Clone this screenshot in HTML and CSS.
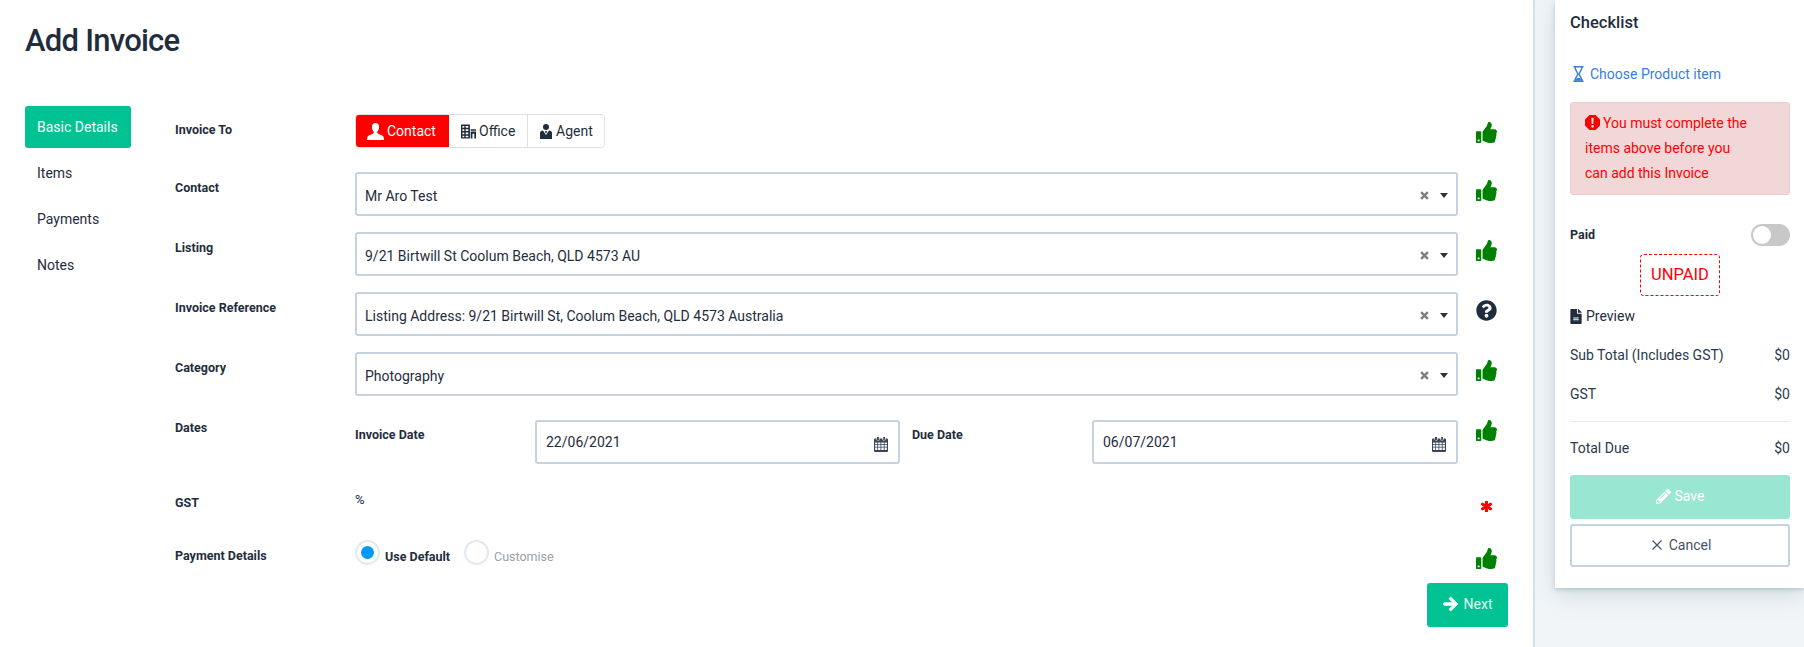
FILE: index.html
```html
<!DOCTYPE html>
<html lang="en">
<head>
<meta charset="utf-8">
<title>Add Invoice</title>
<link rel="stylesheet" href="styles.css">
</head>
<body>
<svg class="sprite" xmlns="http://www.w3.org/2000/svg">
  <symbol id="thumb" viewBox="0 0 512 512"><path d="M104 224H24c-13.255 0-24 10.745-24 24v240c0 13.255 10.745 24 24 24h80c13.255 0 24-10.745 24-24V248c0-13.255-10.745-24-24-24zM64 472c-13.255 0-24-10.745-24-24s10.745-24 24-24 24 10.745 24 24-10.745 24-24 24zM384 81.452c0 42.416-25.97 66.208-33.277 94.548h101.723c33.397 0 59.397 27.746 59.553 58.098.084 17.938-7.546 37.249-19.439 49.197l-.11.11c9.836 23.337 8.237 56.037-9.308 79.469 8.681 25.895-.069 57.704-16.382 74.757 4.298 17.598 2.244 32.575-6.148 44.632C440.202 511.587 389.616 512 346.839 512l-2.845-.001c-48.287-.017-87.806-17.598-119.56-31.725-15.957-7.099-36.821-15.887-52.651-16.178-6.54-.12-11.783-5.457-11.783-11.998v-213.77c0-3.2 1.282-6.271 3.558-8.521 39.614-39.144 56.648-80.587 89.117-113.111 14.804-14.832 20.188-37.236 25.393-58.902C282.515 39.293 291.817 0 312 0c24 0 72 8 72 81.452z"/></symbol>
  <symbol id="question" viewBox="0 0 512 512"><path d="M504 256c0 136.997-111.043 248-248 248S8 392.997 8 256C8 119.083 119.043 8 256 8s248 111.083 248 248zM262.655 90c-54.497 0-89.255 22.957-116.549 63.758-3.536 5.286-2.353 12.415 2.715 16.258l34.699 26.31c5.205 3.947 12.621 3.008 16.665-2.122 17.864-22.658 30.113-35.797 57.303-35.797 20.429 0 45.698 13.148 45.698 32.958 0 14.976-12.363 22.667-32.534 33.976C247.128 238.528 216 254.941 216 296v4c0 6.627 5.373 12 12 12h56c6.627 0 12-5.373 12-12v-1.333c0-28.462 83.186-29.647 83.186-106.667 0-58.002-60.165-102-116.531-102zM256 338c-25.365 0-46 20.635-46 46 0 25.364 20.635 46 46 46s46-20.636 46-46c0-25.365-20.635-46-46-46z"/></symbol>
  <symbol id="asterisk" viewBox="0 0 512 512"><path stroke="currentColor" stroke-width="50" d="M478.21 334.093L336 256l142.21-78.093c11.795-6.477 15.961-21.384 9.232-33.037l-19.48-33.741c-6.728-11.653-21.72-15.499-33.227-8.523L296 186.718l3.475-162.204C299.763 11.061 288.937 0 275.48 0h-38.96c-13.456 0-24.283 11.061-23.994 24.514L216 186.718 77.265 102.606c-11.506-6.976-26.499-3.13-33.227 8.523l-19.48 33.741c-6.728 11.653-2.562 26.56 9.233 33.037L176 256 33.79 334.093c-11.795 6.477-15.961 21.384-9.232 33.037l19.48 33.741c6.728 11.653 21.721 15.499 33.227 8.523L216 325.282l-3.475 162.204C212.237 500.939 223.064 512 236.52 512h38.961c13.456 0 24.283-11.061 23.995-24.514L296 325.282l138.735 84.112c11.506 6.976 26.499 3.13 33.227-8.523l19.48-33.741c6.728-11.653 2.563-26.559-9.232-33.037z"/></symbol>
  <symbol id="calendar" viewBox="0 0 14 15"><path fill-rule="evenodd" d="M3 0h1.6a.6.6 0 0 1 .5.6V3H3.9a1 1 0 0 1-1-1V.6zM9.2.6a.6.6 0 0 1 .6-.6h1.2v2a1 1 0 0 1-1 1h-.8zM1 1.5h1.4V2a1.6 1.6 0 0 0 1.5 1.6h.8A1.2 1.2 0 0 0 5.700 2.400V1.500h2.700V2.400a1.200 1.200 0 0 0 1.100 1.200h.6A1.600 1.600 0 0 0 11.600 2v-.5H13a1 1 0 0 1 1 1V14a1 1 0 0 1-1 1H1a1 1 0 0 1-1-1V2.500a1 1 0 0 1 1-1zM1.100 5.500v1.700h2.200V5.500zm3 0v1.700h2.400V5.500zm3.200 0v1.700h2.500V5.500zm3.300 0v1.700h2.300V5.500zM1.100 8v1.700h2.200V8zm3 0v1.700h2.400V8zm3.200 0v1.700h2.500V8zm3.300 0v1.700h2.300V8zM1.100 10.500v2a.4.4 0 0 0 .4.4h1.800v-2.400zm3 0v2.400h2.400v-2.400zm3.200 0v2.400h2.500v-2.400zm3.300 0v2.400h1.900a.4.4 0 0 0 .4-.4v-2z"/></symbol>
  <symbol id="user" viewBox="0 0 17 17"><path d="M8.500 0c2.200 0 3.600 1.600 3.600 3.900 0 1.800-.8 3.500-1.700 4.500-.5.700-.3 1.600.5 2 1.500.8 5.100 2 5.600 3.300.3.900.5 2 .5 3.300H0c0-1.300.2-2.400.5-3.300.5-1.300 4.100-2.500 5.600-3.300.8-.4 1-1.300.5-2-.9-1-1.700-2.700-1.700-4.500C4.900 1.600 6.300 0 8.500 0z"/></symbol>
  <symbol id="office" viewBox="0 0 16 15"><path fill-rule="evenodd" d="M0 0h9.500v15H0zM1.500 1.500v2h2v-2zm3.500 0v2h2.800v-2zM1.500 5v2h2V5zM5 5v2h2.800V5zM1.500 8.500v2h2v-2zm3.500 0v2h2.800v-2zM1.500 12v1.700h2V12zM5 12v1.700h2.800V12z"/><path d="M10.300 5H16v1.600h-5.700zM10.300 7.400H16V15h-1.800v-5h-2v5h-1.900z"/></symbol>
  <symbol id="agent" viewBox="0 0 12 15"><circle cx="6" cy="3" r="3"/><path d="M0 9c0-1.600 1.200-2.500 3-2.500L6 11l3-4.500c1.800 0 3 .9 3 2.500v6H0z"/><path d="M5.300 7h1.400l.3 1-.6 1.200L5.800 9.200 5 8z"/></symbol>
  <symbol id="hourglass" viewBox="0 0 11 16"><path fill="none" stroke="currentColor" stroke-width="1.500" stroke-linecap="round" d="M1 .8h9M1 15.200h9M1.900.8c0 3.600 2.900 5.300 2.900 7.200s-2.900 3.600-2.900 7.200M9.100.8c0 3.600-2.900 5.300-2.900 7.200s2.900 3.600 2.900 7.200"/><path fill="currentColor" d="M2.200 14.800c.4-1.900 2-3 3.300-3s2.900 1.100 3.300 3z"/></symbol>
  <symbol id="alert" viewBox="0 0 16 16"><path fill-rule="evenodd" d="M4.700 0h6.600L16 4.700v6.600L11.300 16H4.700L0 11.300V4.700zM6.700 3l.4 6.500h1.800L9.300 3zM8 10.600a1.500 1.500 0 1 0 0 3 1.500 1.500 0 0 0 0-3z"/></symbol>
  <symbol id="file" viewBox="0 0 384 512"><path d="M224 136V0H24C10.700 0 0 10.700 0 24v464c0 13.300 10.700 24 24 24h336c13.300 0 24-10.700 24-24V160H248c-13.200 0-24-10.800-24-24zm64 236c0 6.600-5.400 12-12 12H108c-6.600 0-12-5.400-12-12v-8c0-6.600 5.400-12 12-12h168c6.600 0 12 5.400 12 12v8zm0-64c0 6.600-5.400 12-12 12H108c-6.600 0-12-5.400-12-12v-8c0-6.600 5.400-12 12-12h168c6.600 0 12 5.400 12 12v8zm96-186.100v6.100H256V0h6.100c6.400 0 12.500 2.500 17 7l97.900 98c4.500 4.500 7 10.600 7 16.900z"/></symbol>
  <symbol id="pencil" viewBox="0 0 512 512"><path d="M497.900 142.100l-46.100 46.100c-4.700 4.700-12.300 4.700-17 0l-111-111c-4.700-4.700-4.700-12.300 0-17l46.100-46.100c18.700-18.700 49.100-18.700 67.900 0l60.100 60.100c18.800 18.700 18.800 49.100 0 67.900zM284.200 99.800L21.600 362.400.4 483.900c-2.900 16.400 11.400 30.600 27.800 27.800l121.500-21.300 262.600-262.600c4.700-4.700 4.700-12.300 0-17l-111-111c-4.800-4.700-12.400-4.700-17.100 0zM124.100 339.900c-5.500-5.500-5.500-14.300 0-19.800l154-154c5.500-5.500 14.300-5.500 19.800 0s5.500 14.300 0 19.800l-154 154c-5.500 5.500-14.300 5.500-19.800 0zM88 424h48v36.300l-64.500 11.300-31.100-31.100L51.700 376H88v48z"/></symbol>
  <symbol id="arrow" viewBox="0 0 448 512"><path stroke="currentColor" stroke-width="30" d="M190.500 66.900l22.200-22.200c9.400-9.400 24.600-9.400 33.900 0L441 239c9.400 9.400 9.400 24.600 0 33.900L246.600 467.300c-9.400 9.400-24.600 9.400-33.900 0l-22.200-22.200c-9.500-9.500-9.300-25 .4-34.300L311.400 296H24c-13.300 0-24-10.700-24-24v-32c0-13.300 10.700-24 24-24h287.400L190.900 101.200c-9.800-9.300-10-24.800-.4-34.300z"/></symbol>
  <symbol id="times" viewBox="0 0 10 10"><path fill="none" stroke="currentColor" stroke-width="1.200" d="M.5.500l9 9M9.500.500l-9 9"/></symbol>
  <symbol id="clear" viewBox="0 0 8 8"><path fill="none" stroke="currentColor" stroke-width="2.200" d="M1 1l6 6M7 1L1 7"/></symbol>
</svg>

<div class="page">
  <main class="main">
    <h1 class="title">Add Invoice</h1>
    <div class="content">
      <nav class="nav">
        <a class="nav-item nav-active">Basic Details</a>
        <a class="nav-item">Items</a>
        <a class="nav-item">Payments</a>
        <a class="nav-item">Notes</a>
      </nav>
      <form class="form">
        <div class="row row-first">
          <label class="label">Invoice To</label>
          <div class="btn-group">
            <button type="button" class="seg seg-contact"><svg class="ic-user"><use href="#user"/></svg>Contact</button>
            <button type="button" class="seg seg-office"><svg class="ic-office"><use href="#office"/></svg>Office</button>
            <button type="button" class="seg seg-agent"><svg class="ic-agent"><use href="#agent"/></svg>Agent</button>
          </div>
          <svg class="status ok"><use href="#thumb"/></svg>
        </div>
        <div class="row">
          <label class="label">Contact</label>
          <div class="select"><span class="select-value">Mr Aro Test</span><svg class="clear"><use href="#clear"/></svg><span class="caret"></span></div>
          <svg class="status ok"><use href="#thumb"/></svg>
        </div>
        <div class="row">
          <label class="label">Listing</label>
          <div class="select"><span class="select-value">9/21 Birtwill St Coolum Beach, QLD 4573 AU</span><svg class="clear"><use href="#clear"/></svg><span class="caret"></span></div>
          <svg class="status ok"><use href="#thumb"/></svg>
        </div>
        <div class="row">
          <label class="label">Invoice Reference</label>
          <div class="select"><span class="select-value">Listing Address: 9/21 Birtwill St, Coolum Beach, QLD 4573 Australia</span><svg class="clear"><use href="#clear"/></svg><span class="caret"></span></div>
          <svg class="status help"><use href="#question"/></svg>
        </div>
        <div class="row">
          <label class="label">Category</label>
          <div class="select"><span class="select-value">Photography</span><svg class="clear"><use href="#clear"/></svg><span class="caret"></span></div>
          <svg class="status ok"><use href="#thumb"/></svg>
        </div>
        <div class="row row-dates">
          <label class="label">Dates</label>
          <div class="dates">
            <label class="sublabel">Invoice Date</label>
            <div class="date-input date-from"><span class="date-value">22/06/2021</span><svg class="ic-cal"><use href="#calendar"/></svg></div>
            <label class="sublabel sublabel-due">Due Date</label>
            <div class="date-input date-to"><span class="date-value">06/07/2021</span><svg class="ic-cal"><use href="#calendar"/></svg></div>
          </div>
          <svg class="status ok"><use href="#thumb"/></svg>
        </div>
        <div class="row row-gst">
          <label class="label">GST</label>
          <div class="percent">%</div>
          <svg class="status req"><use href="#asterisk"/></svg>
        </div>
        <div class="row row-pay">
          <label class="label">Payment Details</label>
          <div class="radios">
            <span class="radio radio-on"></span><span class="radio-text">Use Default</span>
            <span class="radio radio-off"></span><span class="radio-text radio-text-off">Customise</span>
          </div>
          <svg class="status ok"><use href="#thumb"/></svg>
        </div>
        <div class="form-foot">
          <button type="button" class="next"><svg class="ic-arrow"><use href="#arrow"/></svg>Next</button>
        </div>
      </form>
    </div>
  </main>
  <aside class="side">
    <section class="panel">
      <h2 class="panel-title">Checklist</h2>
      <a class="todo"><svg class="ic-hourglass"><use href="#hourglass"/></svg>Choose Product item</a>
      <div class="alert"><svg class="ic-alert"><use href="#alert"/></svg>You must complete the<br>items above before you<br>can add this Invoice</div>
      <div class="paid-row"><span class="paid-label">Paid</span><span class="toggle"><span class="knob"></span></span></div>
      <div class="stamp">UNPAID</div>
      <div class="preview"><svg class="ic-file"><use href="#file"/></svg>Preview</div>
      <div class="line line-sub"><span>Sub Total (Includes GST)</span><span>$0</span></div>
      <div class="line line-gst"><span>GST</span><span>$0</span></div>
      <hr class="rule">
      <div class="line line-total"><span>Total Due</span><span>$0</span></div>
      <button type="button" class="save"><svg class="ic-pencil"><use href="#pencil"/></svg>Save</button>
      <button type="button" class="cancel"><svg class="ic-times"><use href="#times"/></svg>Cancel</button>
    </section>
  </aside>
</div>
</body>
</html>
```
FILE: styles.css
```css
* { box-sizing: border-box; }
html, body { margin: 0; height: 647px; overflow: hidden; }
body { font-family: Roboto, "Liberation Sans", sans-serif; font-size: 14px; color: #1f2d3d; background: #fff; }
.sprite { display: none; }
svg { fill: currentColor; display: block; flex: none; }
button { font: inherit; cursor: pointer; }

.page { display: flex; height: 647px; }
.main { width: 1533px; padding-left: 25px; background: #fff; flex: none; }
.title { margin: 0; padding-top: 22px; height: 106px; font-size: 31px; line-height: 38px; font-weight: 500; color: #1f2d3d; letter-spacing: -.75px; }

.content { display: flex; }
.nav { width: 106px; flex: none; display: flex; flex-direction: column; gap: 4px; }
.nav-item { height: 42px; line-height: 42px; padding-left: 12px; border-radius: 3px; color: #1f2d3d; }
.nav-active { background: #00c292; color: #fff; }

.form { margin-left: 44px; width: 1333px; padding-top: 8px; }
.row { display: grid; grid-template-columns: 180px 1103px 1fr; height: 60px; align-items: start; }
.row-first { height: 58px; }
.row-dates { height: 75px; }
.row-gst { height: 53px; }
.row-pay { height: 43px; }
.label { font-size: 12.5px; font-weight: 700; line-height: 16px; padding-top: 8px; color: #1f2d3d; }
.status { width: 21px; height: 21px; margin: 8px 0 0 18px; }
.ok { color: #008000; }
.help { color: #1f2d3d; }
.req { color: #ff0000; width: 11px; height: 11px; margin: 14px 0 0 23px; overflow: visible; }

.btn-group { display: flex; width: 250px; height: 34px; border: 1px solid #dcdfe3; border-radius: 4px; overflow: hidden; }
.seg { display: flex; align-items: center; height: 100%; border: 0; padding: 0; background: #fff; color: #1f2d3d; font-size: 14px; }
.seg-contact { width: 94px; margin: -1px 0 -1px -1px; height: 34px; background: #ff0000; color: #fff; padding-left: 12px; }
.seg-office { width: 79px; padding-left: 12px; border-right: 1px solid #dcdfe3; }
.seg-agent { flex: 1; padding-left: 12px; }
.ic-user { width: 17px; height: 17px; margin-right: 3px; }
.ic-office { width: 15px; height: 15px; margin-right: 3px; }
.ic-agent { width: 12px; height: 15px; margin-right: 4px; }

.select { display: flex; align-items: center; height: 44px; border: 2px solid #c5d3e0; border-radius: 3px; padding: 3px 0 0 8px; background: #fff; }
.select-value { flex: 1; font-size: 14px; }
.clear { width: 9px; height: 9px; margin-right: 11px; color: #808080; }
.caret { width: 0; height: 0; border: 4.500px solid transparent; border-top: 5px solid #333; border-bottom: 0; margin-right: 8px; }

.dates { display: flex; align-items: flex-start; padding-top: 8px; }
.sublabel { width: 180px; font-size: 12.5px; font-weight: 700; line-height: 16px; padding-top: 7px; }
.sublabel-due { width: 192px; padding-left: 12px; }
.date-input { display: flex; align-items: center; height: 44px; border: 2px solid #c5d3e0; border-radius: 3px; padding: 0 10px 0 9px; }
.date-from { width: 365px; }
.date-to { width: 366px; }
.date-value { flex: 1; font-size: 14px; }
.ic-cal { width: 14px; height: 15px; margin-top: 4px; color: #3a4656; }

.percent { font-size: 13px; line-height: 16px; padding-top: 5px; }
.radios { display: flex; align-items: flex-start; }
.radio { width: 25px; height: 25px; border-radius: 50%; border: 2px solid #e3e8ec; flex: none; background: #fff; }
.radio-on { position: relative; }
.radio-on::after { content: ""; position: absolute; left: 4px; top: 4px; width: 13px; height: 13px; border-radius: 50%; background: #0099ff; }
.radio-text { font-size: 12.5px; line-height: 16px; padding-top: 9px; margin-left: 5px; font-weight: 700; width: 79px; }
.radio-text-off { font-weight: 400; color: #9aa0a6; }

.form-foot { display: flex; justify-content: flex-end; }
.next { display: flex; align-items: center; justify-content: center; width: 81px; height: 44px; padding: 0 0 2px; border: 0; border-radius: 3px; background: #00c292; color: #e9fbf6; font-size: 14px; }
.ic-arrow { width: 15px; height: 16px; margin-right: 6px; color: #fff; }

.side { flex: 1; background: #f1f5f8; border-left: 2px solid #d4e1e6; padding-left: 20px; min-width: 0; }
.panel { width: 249px; background: #fff; padding: 13px 14px 21px 15px; box-shadow: 0 2px 4px rgba(120,150,160,.35), 0 6px 22px rgba(120,150,160,.28); }
.panel-title { margin: 0; font-size: 16.500px; line-height: 20px; font-weight: 500; color: #1f2d3d; }
.todo { display: flex; align-items: center; margin-top: 31px; height: 20px; color: #3b7ddd; line-height: 20px; }
.ic-hourglass { width: 11px; height: 16px; margin: 0 6px 0 3px; }
.alert { margin-top: 18px; height: 93px; padding: 8px 14px; line-height: 25px; color: #ff0000; background: #f2d7d9; border: 1px solid #eecbcf; border-radius: 3px; }
.ic-alert { display: inline-block; width: 15px; height: 15px; margin-right: 3px; vertical-align: -2px; }
.paid-row { display: flex; justify-content: space-between; align-items: center; margin-top: 29px; height: 22px; }
.paid-label { font-size: 12.500px; font-weight: 700; margin-top: -2px; }
.toggle { width: 39px; height: 22px; border-radius: 11px; background: #c8c8c8; padding: 2px; }
.knob { display: block; width: 18px; height: 18px; border-radius: 50%; background: #fff; }
.stamp { width: 80px; height: 42px; margin: 8px auto 0; border: 1px dashed #ff0000; border-radius: 4px; color: #ff0000; font-size: 16.500px; line-height: 40px; text-align: center; }
.preview { display: flex; align-items: center; margin-top: 10px; height: 20px; }
.ic-file { width: 12px; height: 15px; margin-right: 4px; }
.line { display: flex; justify-content: space-between; height: 20px; line-height: 20px; color: #2b3a4a; }
.line-sub { margin-top: 19px; }
.line-gst { margin-top: 19px; }
.rule { margin: 17px 0 0; border: 0; height: 1px; background: #e6ebef; }
.line-total { margin-top: 16px; }
.save { display: flex; align-items: center; justify-content: center; width: 100%; height: 44px; margin-top: 17px; padding: 0 0 2px; border: 0; border-radius: 3px; background: #99e6d2; color: #fff; font-size: 14px; }
.ic-pencil { width: 15px; height: 15px; margin-right: 4px; }
.cancel { display: flex; align-items: center; justify-content: center; width: 100%; height: 43px; margin-top: 5px; padding: 0 0 1px 3px; border: 2px solid #c5d3e0; border-radius: 3px; background: #fff; color: #44546a; font-size: 14px; }
.ic-times { width: 10px; height: 10px; margin-right: 7px; }
```
